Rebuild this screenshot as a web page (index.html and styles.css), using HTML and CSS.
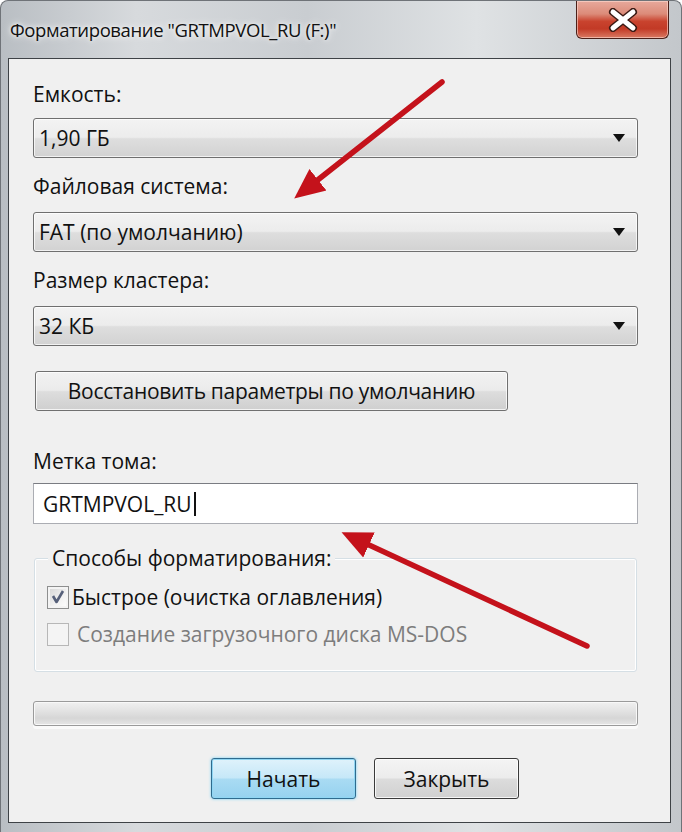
FILE: index.html
```html
<!DOCTYPE html>
<html lang="ru">
<head>
<meta charset="utf-8">
<link rel="stylesheet" href="styles.css">
</head>
<body>
<div class="window">
  <div class="titlebar">
    <div class="title">Форматирование "GRTMPVOL_RU (F:)"</div>
    <div class="close">
      <svg width="34" height="24" viewBox="0 0 34 24">
        <path d="M7 4 L27 20 M27 4 L7 20" stroke="#3a1a14" stroke-width="8" stroke-linecap="round"/>
        <path d="M7 4 L27 20 M27 4 L7 20" stroke="#ffffff" stroke-width="5" stroke-linecap="round"/>
      </svg>
    </div>
  </div>
  <div class="panel">
    <div class="label l1">Емкость:</div>
    <div class="combo c1"><span>1,90 ГБ</span><i class="arrow"></i></div>
    <div class="label l2">Файловая система:</div>
    <div class="combo c2"><span>FAT (по умолчанию)</span><i class="arrow"></i></div>
    <div class="label l3">Размер кластера:</div>
    <div class="combo c3"><span>32 КБ</span><i class="arrow"></i></div>
    <div class="restore">Восстановить параметры по умолчанию</div>
    <div class="label l4">Метка тома:</div>
    <div class="input"><span>GRTMPVOL_RU</span><i class="caret"></i></div>
    <div class="group">
      <div class="group-title">Способы форматирования:</div>
      <div class="check-row">
        <span class="box checked">
          <svg width="16" height="16" viewBox="0 0 16 16"><path d="M3 7 L6.5 13 L13 2" fill="none" stroke="#56607a" stroke-width="2.6" stroke-linejoin="round"/></svg>
        </span>
        <span class="check-text">Быстрое (очистка оглавления)</span>
      </div>
      <div class="check-row disabled">
        <span class="box"></span>
        <span class="check-text">Создание загрузочного диска MS-DOS</span>
      </div>
    </div>
    <div class="progress"></div>
    <div class="buttons">
      <div class="btn primary">Начать</div>
      <div class="btn">Закрыть</div>
    </div>
  </div>
  <svg class="arrows" width="682" height="832" viewBox="0 0 682 832">
    <defs>
      <marker id="head" markerWidth="6" markerHeight="6" refX="3" refY="3" orient="auto" markerUnits="strokeWidth">
        <path d="M0 0.5 L5.5 3 L0 5.5 Z" fill="#c4121b"/>
      </marker>
    </defs>
    <line x1="442" y1="82" x2="305" y2="190" stroke="#c4121b" stroke-width="5.5" stroke-linecap="round" marker-end="url(#head)"/>
    <line x1="587" y1="646" x2="354" y2="538" stroke="#c4121b" stroke-width="5.5" stroke-linecap="round" marker-end="url(#head)"/>
  </svg>
</div>
</body>
</html>
```
FILE: styles.css
```css
* { box-sizing: border-box; }
html, body { margin: 0; padding: 0; background: #ffffff; }
body { font-family: "Open Sans", "Noto Sans", sans-serif; color: #111; }

.window {
  position: relative;
  width: 682px;
  height: 832px;
  border-radius: 8px 8px 0 0;
  background: linear-gradient(90deg, #b9bec3 0%, #d7dadd 20%, #c9cdd1 45%, #dfe2e4 70%, #c3c7cb 100%);
  border: 1px solid #6f7378;
  border-bottom: none;
  overflow: hidden;
}

.titlebar {
  height: 57px;
  display: flex;
  justify-content: space-between;
  align-items: flex-start;
}
.title {
  margin: 16px 0 0 9px;
  font-size: 18.5px;
  letter-spacing: -0.4px;
  color: #111;
  text-shadow: 0 0 8px #f4f4f4, 0 0 4px #ffffff;
}
.close {
  width: 93px;
  height: 38px;
  margin-right: 12px;
  border: 1px solid #4b2019;
  border-top: none;
  border-radius: 0 0 6px 6px;
  background: linear-gradient(180deg, #e7a99c 0%, #dc8b79 35%, #c9432e 55%, #c23a26 75%, #d97a63 100%);
  box-shadow: inset 0 0 0 1px rgba(255,220,210,0.6);
  display: flex;
  align-items: center;
  justify-content: center;
}

.panel {
  width: 663px;
  height: 765px;
  margin-left: 7px;
  border: 1px solid #3e4246;
  background: #f0f0f0;
  padding: 0 32px 0 24px;
  display: flex;
  flex-direction: column;
}

.label {
  font-size: 21px;
  line-height: 24px;
  height: 24px;
}
.l1 { margin-top: 23px; }
.l2, .l3 { margin-top: 16px; }
.l4 { margin-top: 38px; }

.combo {
  height: 40px;
  margin-top: 12px;
  border: 1px solid #6f6f6f;
  border-radius: 3px;
  background: linear-gradient(180deg, #f3f3f3 0%, #ececec 48%, #dedede 52%, #d2d2d2 100%);
  box-shadow: inset 0 0 0 1px rgba(255,255,255,0.7);
  display: flex;
  align-items: center;
  justify-content: space-between;
  padding: 0 12px 0 5px;
  font-size: 21px;
}
.c2, .c3 { margin-top: 14px; }
.arrow {
  width: 0;
  height: 0;
  border-left: 6px solid transparent;
  border-right: 6px solid transparent;
  border-top: 8px solid #111;
}

.restore {
  width: 473px;
  height: 40px;
  margin: 25px 0 0 2px;
  border: 1px solid #707070;
  border-radius: 3px;
  background: linear-gradient(180deg, #f2f2f2 0%, #ebebeb 48%, #dddddd 52%, #cfcfcf 100%);
  box-shadow: inset 0 0 0 1px rgba(255,255,255,0.75);
  display: flex;
  align-items: center;
  justify-content: center;
  font-size: 21px;
  letter-spacing: -0.3px;
}

.input {
  height: 41px;
  margin-top: 10px;
  border: 1px solid #abadb3;
  border-top-color: #7a7c82;
  background: #ffffff;
  display: flex;
  align-items: center;
  padding-left: 9px;
  font-size: 21px;
}
.caret {
  width: 2px;
  height: 24px;
  background: #111;
  margin-left: 2px;
}

.group {
  height: 114px;
  margin-top: 34px;
  margin-left: 1px;
  margin-right: 1px;
  border: 1px solid #d5dfe5;
  border-radius: 3px;
  box-shadow: inset 0 0 0 1px #ffffff;
  padding: 0 0 0 12px;
}
.group-title {
  width: fit-content;
  margin-top: -13px;
  margin-left: 1px;
  padding: 0 4px;
  background: #f0f0f0;
  font-size: 21px;
  line-height: 24px;
}
.check-row {
  display: flex;
  align-items: center;
  height: 24px;
  margin-top: 15px;
  font-size: 21px;
}
.check-row + .check-row { margin-top: 13px; }
.box {
  width: 22px;
  height: 23px;
  border: 1px solid #8e8f8f;
  background: linear-gradient(135deg, #d4d4d4 0%, #f2f2f2 60%, #ffffff 100%);
  box-shadow: inset 0 0 0 2px #f4f4f4;
  display: flex;
  align-items: center;
  justify-content: center;
  flex: none;
}
.check-text { margin-left: 3px; }
.disabled .box { border-color: #b7b7b7; background: #f4f4f4; }
.disabled .check-text { color: #7d7d7d; margin-left: 8px; }

.progress {
  height: 25px;
  margin-top: 29px;
  border: 1px solid #9a9a9a;
  border-radius: 3px;
  background: linear-gradient(180deg, #f0f0f0 0%, #e2e2e2 40%, #d6d6d6 70%, #e6e6e6 100%);
  box-shadow: inset 0 0 0 1px #f8f8f8, 0 3px 0 #fafafa;
}

.buttons {
  display: flex;
  gap: 18px;
  margin-top: 32px;
  margin-left: 178px;
}
.btn {
  width: 145px;
  height: 41px;
  border: 1px solid #3a3a3a;
  border-radius: 3px;
  background: linear-gradient(180deg, #f4f4f4 0%, #ececec 48%, #dcdcdc 52%, #d0d0d0 100%);
  box-shadow: inset 0 0 0 1px rgba(255,255,255,0.8);
  display: flex;
  align-items: center;
  justify-content: center;
  font-size: 21px;
}
.btn.primary {
  border-color: #2f6b8e;
  background: linear-gradient(180deg, #dff2fb 0%, #c6e8f8 48%, #a9dbf3 52%, #96d2ef 100%);
  box-shadow: inset 0 0 0 1px #8fd6f3, 0 0 3px #6fd0f5;
}

.arrows {
  position: absolute;
  left: -1px;
  top: -1px;
  pointer-events: none;
}
```
